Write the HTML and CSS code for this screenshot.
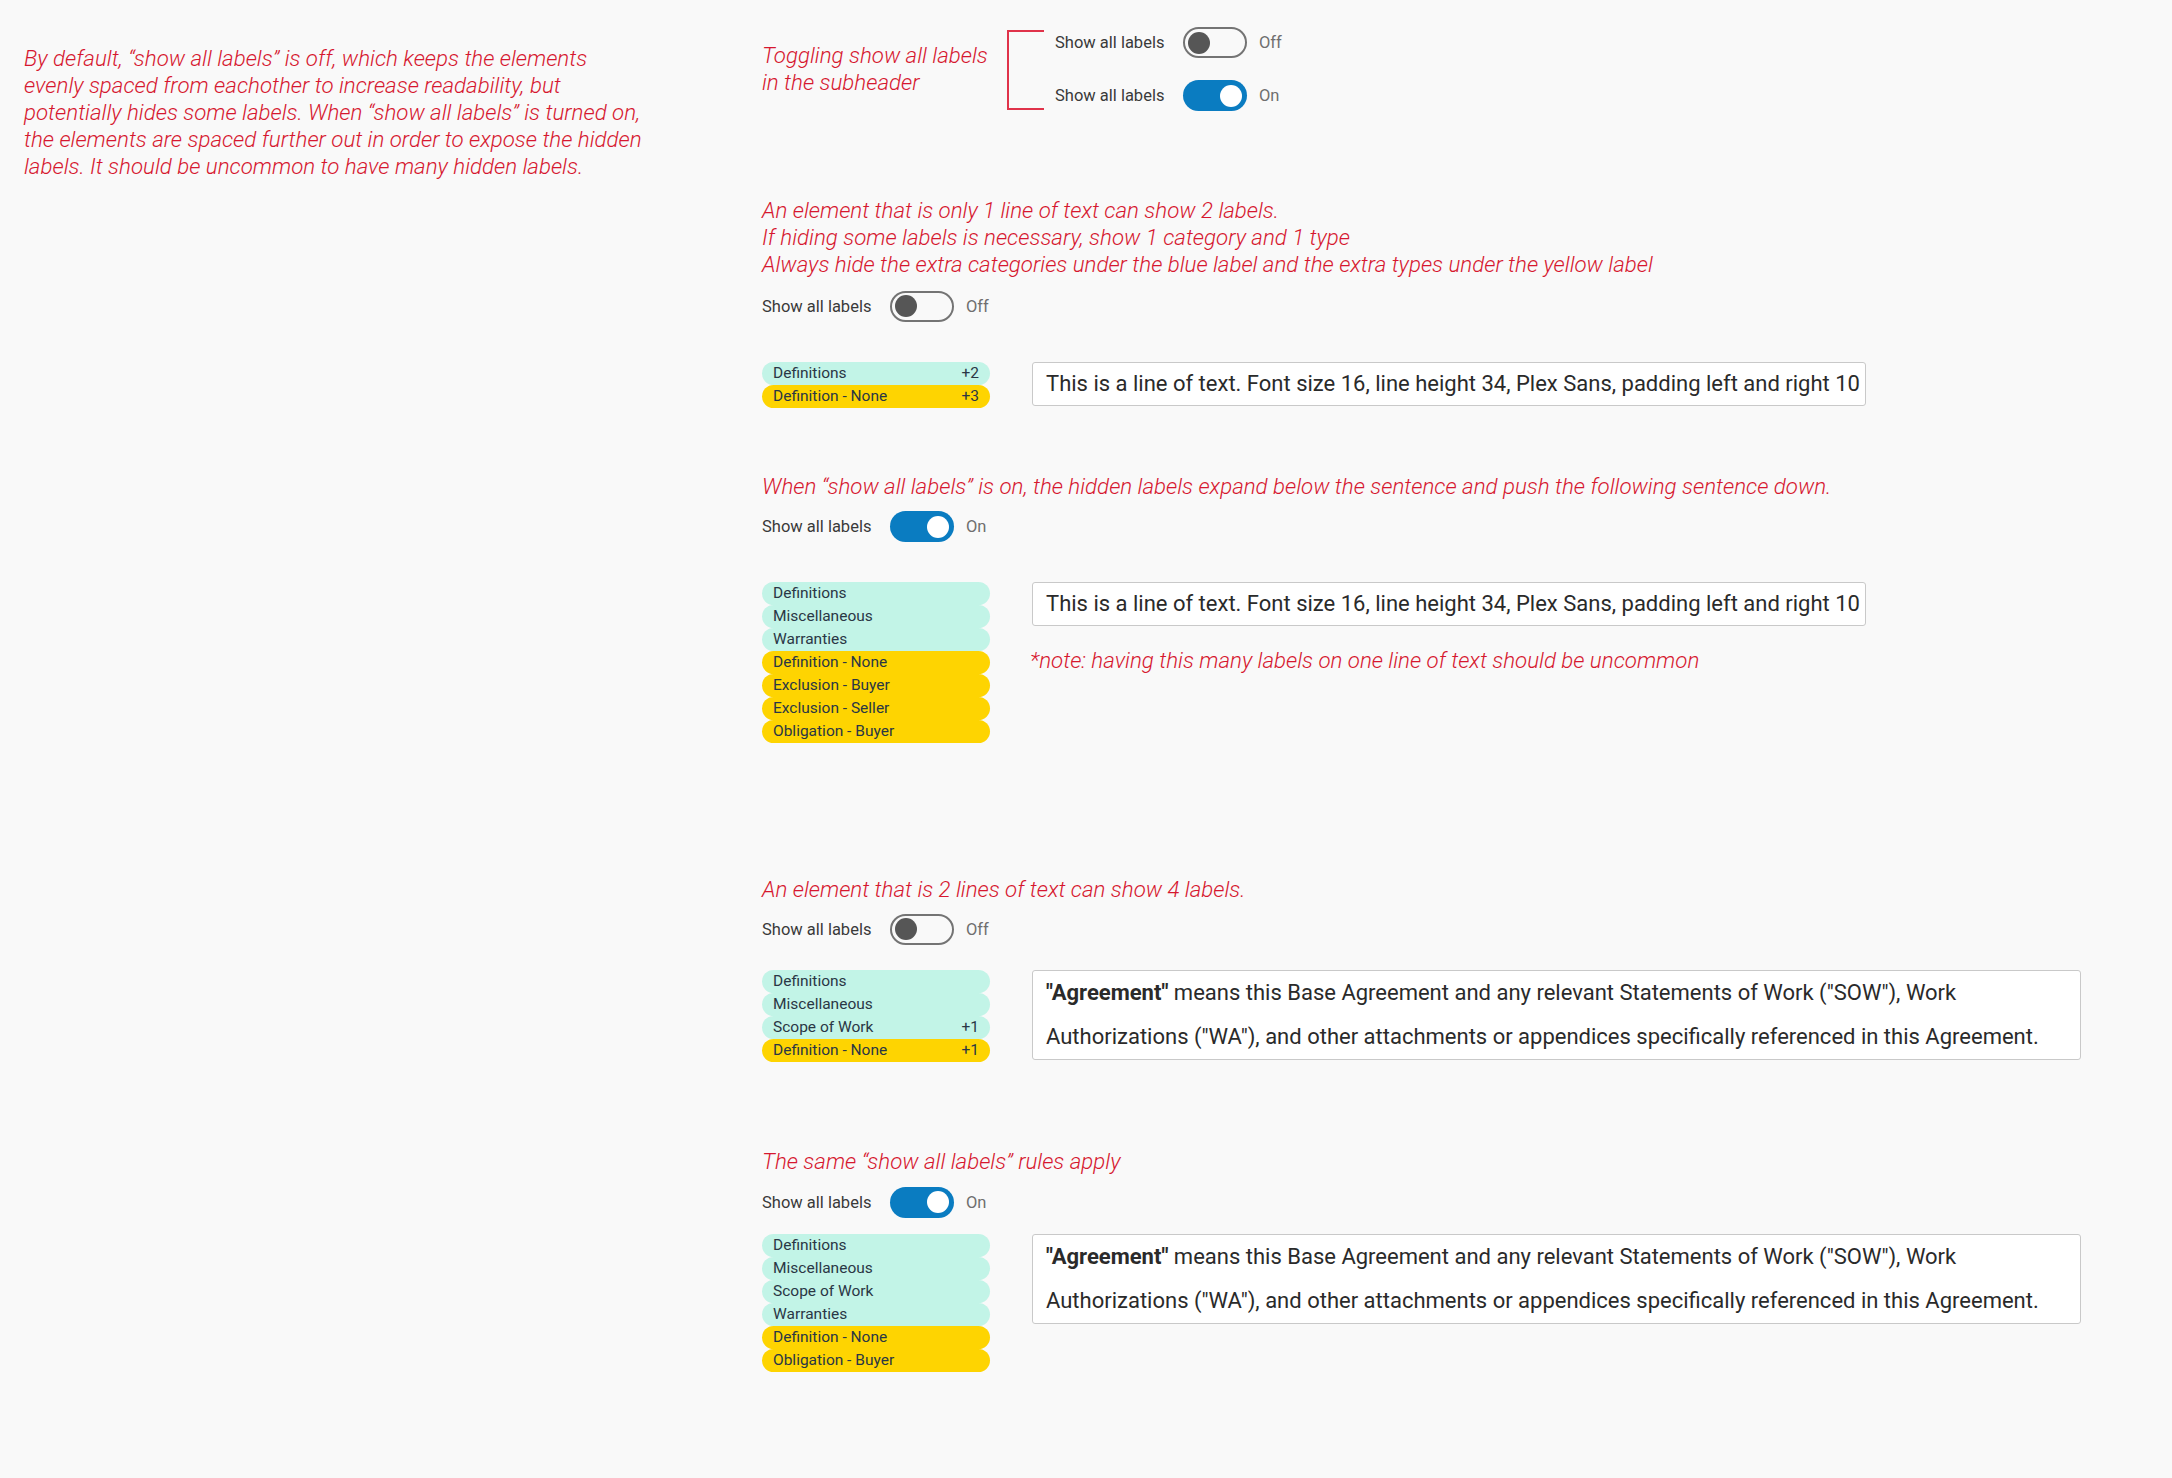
FILE: index.html
```html
<!DOCTYPE html>
<html lang="en">
<head>
<meta charset="utf-8">
<title>Show all labels</title>
<link rel="stylesheet" href="styles.css">
</head>
<body>
<div class="page">
  <aside class="intro">
    <p class="note">By default, “show all labels” is off, which keeps the elements<br>evenly spaced from eachother to increase readability, but<br>potentially hides some labels. When “show all labels” is turned on,<br>the elements are spaced further out in order to expose the hidden<br>labels. It should be uncommon to have many hidden labels.</p>
  </aside>

  <main class="main">
    <section class="header-demo">
      <p class="note toggling">Toggling show all labels<br>in the subheader</p>
      <div class="bracket"></div>
      <div class="toggle-stack">
        <div class="toggle-row">
          <span class="toggle-label">Show all labels</span>
          <span class="switch off"><span class="knob"></span></span>
          <span class="state">Off</span>
        </div>
        <div class="toggle-row">
          <span class="toggle-label">Show all labels</span>
          <span class="switch on"><span class="knob"></span></span>
          <span class="state">On</span>
        </div>
      </div>
    </section>

    <section class="demo demo-2">
      <p class="note">An element that is only 1 line of text can show 2 labels.<br>If hiding some labels is necessary, show 1 category and 1 type<br>Always hide the extra categories under the blue label and the extra types under the yellow label</p>
      <div class="toggle-row">
        <span class="toggle-label">Show all labels</span>
        <span class="switch off"><span class="knob"></span></span>
        <span class="state">Off</span>
      </div>
      <div class="example">
        <div class="pills">
          <div class="pill cat"><span>Definitions</span><span>+2</span></div>
          <div class="pill type"><span>Definition - None</span><span>+3</span></div>
        </div>
        <div class="text-col">
          <div class="textbox single">This is a line of text. Font size 16, line height 34, Plex Sans, padding left and right 10</div>
        </div>
      </div>
    </section>

    <section class="demo demo-3">
      <p class="note">When “show all labels” is on, the hidden labels expand below the sentence and push the following sentence down.</p>
      <div class="toggle-row">
        <span class="toggle-label">Show all labels</span>
        <span class="switch on"><span class="knob"></span></span>
        <span class="state">On</span>
      </div>
      <div class="example">
        <div class="pills">
          <div class="pill cat"><span>Definitions</span></div>
          <div class="pill cat"><span>Miscellaneous</span></div>
          <div class="pill cat"><span>Warranties</span></div>
          <div class="pill type"><span>Definition - None</span></div>
          <div class="pill type"><span>Exclusion - Buyer</span></div>
          <div class="pill type"><span>Exclusion - Seller</span></div>
          <div class="pill type"><span>Obligation - Buyer</span></div>
        </div>
        <div class="text-col">
          <div class="textbox single">This is a line of text. Font size 16, line height 34, Plex Sans, padding left and right 10</div>
          <p class="note box-note">*note: having this many labels on one line of text should be uncommon</p>
        </div>
      </div>
    </section>

    <section class="demo demo-4">
      <p class="note">An element that is 2 lines of text can show 4 labels.</p>
      <div class="toggle-row">
        <span class="toggle-label">Show all labels</span>
        <span class="switch off"><span class="knob"></span></span>
        <span class="state">Off</span>
      </div>
      <div class="example">
        <div class="pills">
          <div class="pill cat"><span>Definitions</span></div>
          <div class="pill cat"><span>Miscellaneous</span></div>
          <div class="pill cat"><span>Scope of Work</span><span>+1</span></div>
          <div class="pill type"><span>Definition - None</span><span>+1</span></div>
        </div>
        <div class="text-col">
          <div class="textbox double"><b>"Agreement"</b> means this Base Agreement and any relevant Statements of Work ("SOW"), Work<br>Authorizations ("WA"), and other attachments or appendices specifically referenced in this Agreement.</div>
        </div>
      </div>
    </section>

    <section class="demo demo-5">
      <p class="note">The same “show all labels” rules apply</p>
      <div class="toggle-row">
        <span class="toggle-label">Show all labels</span>
        <span class="switch on"><span class="knob"></span></span>
        <span class="state">On</span>
      </div>
      <div class="example">
        <div class="pills">
          <div class="pill cat"><span>Definitions</span></div>
          <div class="pill cat"><span>Miscellaneous</span></div>
          <div class="pill cat"><span>Scope of Work</span></div>
          <div class="pill cat"><span>Warranties</span></div>
          <div class="pill type"><span>Definition - None</span></div>
          <div class="pill type"><span>Obligation - Buyer</span></div>
        </div>
        <div class="text-col">
          <div class="textbox double"><b>"Agreement"</b> means this Base Agreement and any relevant Statements of Work ("SOW"), Work<br>Authorizations ("WA"), and other attachments or appendices specifically referenced in this Agreement.</div>
        </div>
      </div>
    </section>
  </main>
</div>
</body>
</html>
```

FILE: styles.css
```css
html, body {
  margin: 0;
  padding: 0;
}

body {
  background: #f9f9f9;
  font-family: Roboto, "Liberation Sans", sans-serif;
  color: #333333;
  min-height: 1478px;
}

.page {
  display: flex;
  align-items: flex-start;
}

.intro {
  flex: 0 0 762px;
  box-sizing: border-box;
  padding: 45px 0 0 24px;
}

.note {
  margin: 0;
  color: #d6172f;
  font-style: italic;
  font-weight: 300;
  font-size: 22.3px;
  line-height: 27px;
  white-space: nowrap;
}

.main {
  flex: 1;
  padding-top: 27px;
}

/* header demo */
.header-demo {
  display: flex;
  align-items: center;
}

.toggling {
  width: 245px;
}

.bracket {
  width: 35px;
  height: 76px;
  border: 2px solid #e0334a;
  border-right: none;
  margin-top: 2px;
}

.toggle-stack {
  margin-left: 11px;
  display: flex;
  flex-direction: column;
  gap: 22px;
}

/* toggle */
.toggle-row {
  display: flex;
  align-items: center;
  height: 31px;
}

.toggle-label {
  width: 128px;
  font-size: 16.5px;
  color: #3a3a3a;
  white-space: nowrap;
}

.switch {
  width: 64px;
  height: 31px;
  box-sizing: border-box;
  border-radius: 16px;
  display: flex;
  align-items: center;
}

.switch.off {
  border: 2px solid #747474;
  padding-left: 3px;
  justify-content: flex-start;
}

.switch.on {
  background: #0a7cc1;
  padding-right: 5px;
  justify-content: flex-end;
}

.knob {
  width: 22px;
  height: 22px;
  border-radius: 50%;
  background: #565656;
}

.switch.on .knob {
  background: #ffffff;
}

.state {
  margin-left: 12px;
  font-size: 16.5px;
  color: #6f6f6f;
}

/* demos */
.demo-2 { margin-top: 86px; }
.demo-2 .toggle-row { margin-top: 12.5px; }
.demo-2 .example { margin-top: 40px; }

.demo-3 { margin-top: 65.5px; }
.demo-3 .toggle-row { margin-top: 11px; }
.demo-3 .example { margin-top: 39.5px; }

.demo-4 { margin-top: 133.5px; }
.demo-4 .toggle-row { margin-top: 10.5px; }
.demo-4 .example { margin-top: 25px; }

.demo-5 { margin-top: 86.5px; }
.demo-5 .toggle-row { margin-top: 11.5px; }
.demo-5 .example { margin-top: 16px; }

.example {
  display: flex;
  align-items: flex-start;
  gap: 42px;
}

.pills {
  flex: 0 0 228px;
  display: flex;
  flex-direction: column;
}

.pill {
  display: flex;
  justify-content: space-between;
  align-items: center;
  height: 23px;
  border-radius: 12px;
  padding: 0 11px;
  font-size: 15.5px;
  color: #2a3745;
  white-space: nowrap;
}

.pill.cat {
  background: #c2f4e7;
}

.pill.type {
  background: #fed401;
}

.textbox {
  box-sizing: border-box;
  background: #ffffff;
  border: 1px solid #c9c9c9;
  border-radius: 3px;
  padding: 0 13px;
  font-size: 22px;
  color: #2a2a2a;
  white-space: nowrap;
}

.textbox b {
  font-weight: 700;
}

.textbox.single {
  width: 834px;
  line-height: 42px;
}

.textbox.double {
  width: 1049px;
  line-height: 44px;
}

.box-note {
  margin-top: 21.5px;
  margin-left: -2px;
}
```
